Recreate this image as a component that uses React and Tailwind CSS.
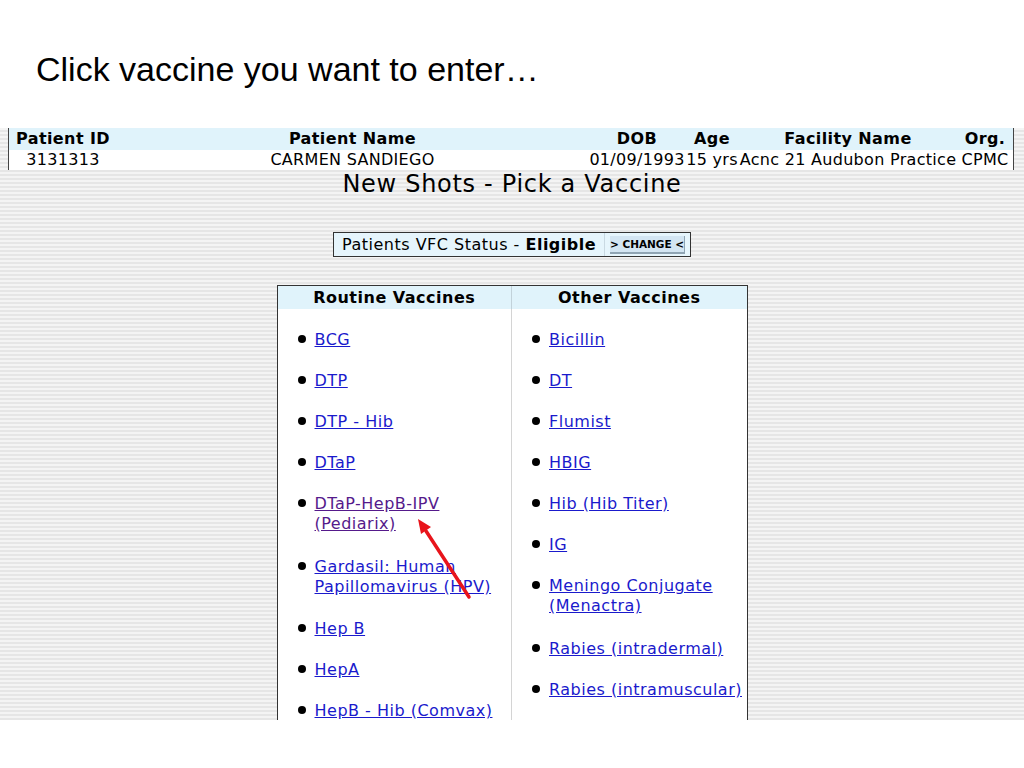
const routine = [
  ["BCG"],
  ["DTP"],
  ["DTP - Hib"],
  ["DTaP"],
  ["DTaP-HepB-IPV", "(Pediarix)"],
  ["Gardasil: Human", "Papillomavirus (HPV)"],
  ["Hep B"],
  ["HepA"],
  ["HepB - Hib (Comvax)"],
];

const other = [
  ["Bicillin"],
  ["DT"],
  ["Flumist"],
  ["HBIG"],
  ["Hib (Hib Titer)"],
  ["IG"],
  ["Meningo Conjugate", "(Menactra)"],
  ["Rabies (intradermal)"],
  ["Rabies (intramuscular)"],
];

function VaccineList({ items, visited }) {
  return (
    <div className="flex flex-col gap-[21px] pt-[21px] pl-[20px]">
      {items.map((lines) => {
        const seen = visited === lines[0];
        return (
          <div key={lines[0]} className={`flex items-start ${lines.length > 1 ? "pb-[1.5px]" : ""}`}>
            <span className="mt-[5px] w-[8px] h-[8px] rounded-full bg-black shrink-0" />
            <a
              href="#"
              className={`ml-[9px] text-[16px] leading-[20px] tracking-[0.5px] underline whitespace-nowrap ${
                seen ? "text-[#551a8b]" : "text-[#1a1acc]"
              }`}
            >
              {lines.map((l, i) => (
                <span key={l}>
                  {i > 0 && <br />}
                  {l}
                </span>
              ))}
            </a>
          </div>
        );
      })}
    </div>
  );
}

export default function App() {
  return (
    <div className="w-[1024px] h-[768px] bg-white overflow-hidden relative">
      <h1 className="pt-[49px] pl-[36px] h-[128px] text-[34px] leading-[40px] text-black font-['Liberation_Sans',Arial,sans-serif]">
        Click vaccine you want to enter…
      </h1>

      <div className="relative h-[592px] overflow-hidden bg-[repeating-linear-gradient(180deg,#f4f4f4_0px,#f4f4f4_2px,#e6e6e6_2px,#e6e6e6_4px)] font-['DejaVu_Sans',Verdana,sans-serif] text-black">
        {/* patient header */}
        <div className="ml-[8px] w-[1006px] border-l border-r border-[#444]">
          <div className="grid grid-cols-[108px_471px_98px_52px_220px_54px] bg-[#e0f3fb] h-[22px] text-[16px] leading-[22px] tracking-[0.4px] font-bold text-center whitespace-nowrap">
            <div>Patient ID</div>
            <div>Patient Name</div>
            <div>DOB</div>
            <div>Age</div>
            <div>Facility Name</div>
            <div>Org.</div>
          </div>
          <div className="grid grid-cols-[108px_471px_98px_52px_220px_54px] bg-white h-[20px] text-[16px] leading-[20px] tracking-[0.3px] text-center whitespace-nowrap">
            <div>3131313</div>
            <div>CARMEN SANDIEGO</div>
            <div>01/09/1993</div>
            <div>15 yrs</div>
            <div>Acnc 21 Audubon Practice</div>
            <div>CPMC</div>
          </div>
        </div>

        <h2 className="text-center text-[24px] leading-[28px] tracking-[0.7px]">New Shots - Pick a Vaccine</h2>

        {/* VFC status */}
        <div className="mx-auto mt-[34px] w-[358px] h-[25px] flex items-stretch border border-[#333] bg-[#e6f5fc]">
          <div className="flex-1 pl-[8px] text-[16px] leading-[23px] tracking-[0.5px] whitespace-nowrap">
            Patients VFC Status - <span className="font-bold">Eligible</span>
          </div>
          <div className="w-px bg-[#c9d9e2]" />
          <div className="flex items-center px-[5px]">
            <button className="w-[75px] h-[18px] text-[10.5px] leading-[16px] font-bold bg-[#d3e5f2] border-b-2 border-r border-[#8fa4b3] whitespace-nowrap">
              &gt; CHANGE &lt;
            </button>
          </div>
        </div>

        {/* vaccine table */}
        <div className="mx-auto mt-[28px] w-[471px] border-l border-r border-t border-[#333] bg-white h-[500px]">
          <div className="grid grid-cols-2 h-[23px] bg-[#e0f3fb] text-[16px] leading-[23px] tracking-[0.5px] font-bold text-center">
            <div className="border-r border-[#c2d2da]">Routine Vaccines</div>
            <div>Other Vaccines</div>
          </div>
          <div className="grid grid-cols-2 h-full">
            <div className="border-r border-[#d4d4d4]">
              <VaccineList items={routine} visited="DTaP-HepB-IPV" />
            </div>
            <div>
              <VaccineList items={other} />
            </div>
          </div>
        </div>

        {/* red arrow annotation */}
        <svg className="absolute left-0 top-0 pointer-events-none" width="1024" height="592">
          <line x1="469" y1="469" x2="426" y2="403" stroke="#e8141b" strokeWidth="3.5" strokeLinecap="round" />
          <polygon points="418,391 431,399 421,406" fill="#e8141b" />
        </svg>
      </div>
    </div>
  );
}
